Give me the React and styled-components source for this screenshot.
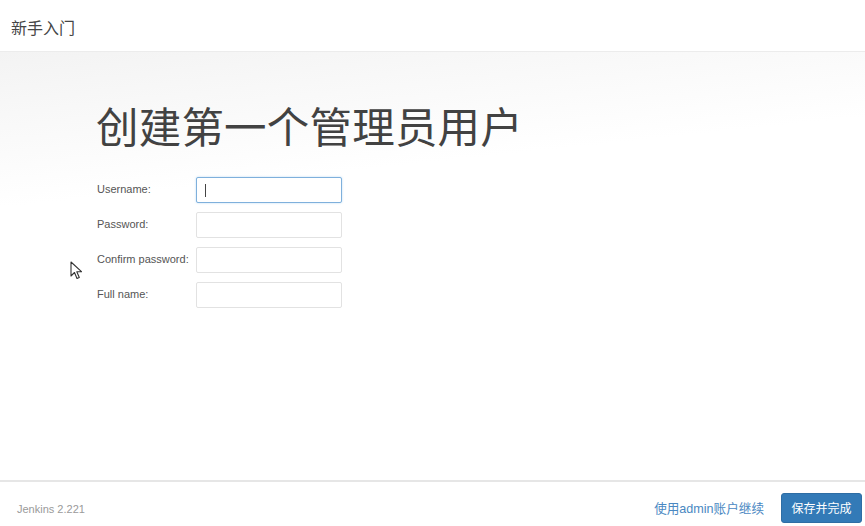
import React from "react";
import styled, {createGlobalStyle} from "styled-components";

const GlobalStyle = createGlobalStyle`
  html, body {
    margin: 0;
    padding: 0;
    height: 100%;
    background: #fff;
  }
  #root {
    height: 100%;
  }
  * {
    box-sizing: border-box;
  }
`;

const fields = [
    {label: "Username:", type: "text", focused: true},
    {label: "Password:", type: "password"},
    {label: "Confirm password:", type: "password"},
    {label: "Full name:", type: "text"},
];

const App = () => {
    return (
        <Wrapper>
            <GlobalStyle/>
            <Header>
                <HeaderTitle>新手入门</HeaderTitle>
            </Header>
            <Body>
                <Heading>创建第一个管理员用户</Heading>
                <Form>
                    {fields.map((f) => (
                        <Row key={f.label}>
                            <Label>{f.label}</Label>
                            <Input type={f.type} $focused={f.focused}>
                                {f.focused && <Caret/>}
                            </Input>
                        </Row>
                    ))}
                </Form>
                <Cursor width="14" height="20" viewBox="0 0 14 20">
                    <path d="M1 1 L1 15 L4.5 11.5 L7 17.5 L9.3 16.5 L6.8 10.7 L11.5 10.7 Z"
                          fill="#fff" stroke="#333" strokeWidth="1.1" strokeLinejoin="round"/>
                </Cursor>
            </Body>
            <Footer>
                <Version>Jenkins 2.221</Version>
                <Actions>
                    <SkipLink href="#">使用admin账户继续</SkipLink>
                    <SaveButton>保存并完成</SaveButton>
                </Actions>
            </Footer>
        </Wrapper>
    );
};

const Wrapper = styled.div`
  width: 100%;
  height: 526px;
  display: flex;
  flex-direction: column;
  font-family: "Liberation Sans", Arial, "Noto Sans CJK SC", sans-serif;
  color: #333;
`;

const Header = styled.div`
  height: 52px;
  flex: none;
  display: flex;
  align-items: center;
  padding: 2px 11px 0;
  border-bottom: 1px solid #ececec;
  background: #fff;
`;

const HeaderTitle = styled.div`
  font-family: "Noto Sans CJK SC", sans-serif;
  font-size: 16px;
  color: #454545;
`;

const Body = styled.div`
  position: relative;
  flex: 1;
  padding: 50px 0 0 96px;
  background: linear-gradient(174deg, #f3f3f3 0%, #f8f8f8 12%, #ffffff 30%);
`;

const Heading = styled.h1`
  margin: 0 0 29px;
  font-family: "Noto Sans CJK SC", sans-serif;
  font-weight: 400;
  font-size: 42.5px;
  line-height: 46px;
  color: #424242;
  letter-spacing: 0.2px;
`;

const Form = styled.div`
  display: flex;
  flex-direction: column;
  gap: 9px;
  padding-left: 1px;
`;

const Row = styled.div`
  display: flex;
  align-items: center;
`;

const Label = styled.div`
  width: 99px;
  font-size: 11px;
  color: #555;
  margin-top: -3px;
`;

const Input = styled.div`
  position: relative;
  width: 146px;
  height: 26px;
  border: 1px solid ${({$focused}) => ($focused ? "#7fb0dc" : "#e2e2e2")};
  border-radius: 2px;
  background: #fff;
  box-shadow: ${({$focused}) => ($focused ? "0 0 2px rgba(102, 175, 233, 0.5)" : "none")};
`;

const Caret = styled.span`
  position: absolute;
  left: 8px;
  top: 6px;
  width: 1px;
  height: 13px;
  background: #444;
`;

const Cursor = styled.svg`
  position: absolute;
  left: 70px;
  top: 209px;
`;

const Footer = styled.div`
  height: 46px;
  flex: none;
  display: flex;
  align-items: center;
  justify-content: space-between;
  padding: 11px 3px 4px 17px;
  border-top: 2px solid #e6e6e6;
  background: #fff;
`;

const Version = styled.div`
  font-size: 11px;
  color: #9a9a9a;
  margin-top: 2px;
`;

const Actions = styled.div`
  display: flex;
  align-items: center;
  gap: 17px;
`;

const SkipLink = styled.a`
  font-family: "Liberation Sans", "Noto Sans CJK SC", sans-serif;
  font-size: 12.6px;
  color: #4a88c2;
  text-decoration: none;
`;

const SaveButton = styled.button`
  height: 30px;
  width: 81px;
  padding: 0;
  border: 1px solid #2e6da4;
  border-radius: 3px;
  background: #337ab7;
  color: #fff;
  font-family: "Noto Sans CJK SC", sans-serif;
  font-size: 12px;
  cursor: pointer;
`;

export default App;
